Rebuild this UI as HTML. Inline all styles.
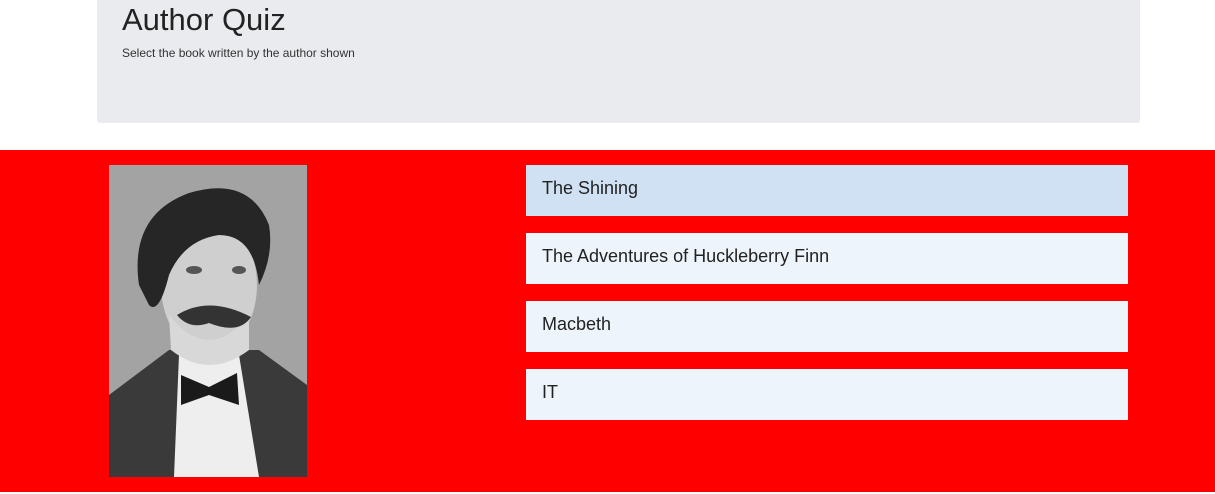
<!DOCTYPE html>
<html><head><meta charset="utf-8"><style>
body{margin:0;width:1215px;height:494px;background:#fff;font-family:"Liberation Sans",sans-serif;position:relative;overflow:hidden}
.jumbo{position:absolute;left:97px;top:0;width:1043px;height:123px;background:#e9ebef;border-radius:0 0 3px 3px}
h1{position:absolute;left:25px;top:2px;margin:0;font-weight:400;font-size:31px;color:#222}
.sub{position:absolute;left:25px;top:46px;font-size:12px;color:#333}
.red{position:absolute;left:0;top:150px;width:1215px;height:342px;background:#f00}
.img{position:absolute;left:109px;top:165px;width:198px;height:312px;background:#9a9a9a;overflow:hidden}
.btn{position:absolute;left:526px;width:602px;height:51px;background:#edf4fc;font-size:18px;color:#222;box-sizing:border-box;padding-left:16px;line-height:47px}
</style></head><body>
<div class="jumbo"><h1>Author Quiz</h1><div class="sub">Select the book written by the author shown</div></div>
<div class="red"></div>
<div class="img"><svg width="198" height="312" viewBox="0 0 198 312">
<rect width="198" height="312" fill="#a3a3a3"/>
<path d="M0 230 L0 312 L198 312 L198 220 L150 185 L60 185 Z" fill="#3a3a3a"/>
<path d="M70 190 L130 190 L150 312 L65 312 Z" fill="#eee"/>
<path d="M72 210 L100 222 L128 208 L130 240 L100 230 L72 240 Z" fill="#1a1a1a"/>
<ellipse cx="100" cy="120" rx="48" ry="68" fill="#cfcfcf"/>
<path d="M60 150 Q100 200 140 150 L140 185 Q100 215 62 185 Z" fill="#d8d8d8"/>
<path d="M68 150 Q100 130 142 152 Q130 170 100 158 Q80 165 68 150Z" fill="#333"/>
<path d="M30 120 Q20 50 80 28 Q140 10 160 60 Q165 90 150 120 Q145 70 110 70 Q75 75 60 110 Q50 150 40 140 Z" fill="#262626"/>
<ellipse cx="85" cy="105" rx="8" ry="4" fill="#555"/><ellipse cx="130" cy="105" rx="7" ry="4" fill="#555"/>
</svg></div>
<div class="btn" style="top:165px;background:#d0e1f4">The Shining</div>
<div class="btn" style="top:233px">The Adventures of Huckleberry Finn</div>
<div class="btn" style="top:301px">Macbeth</div>
<div class="btn" style="top:369px">IT</div>
</body></html>
